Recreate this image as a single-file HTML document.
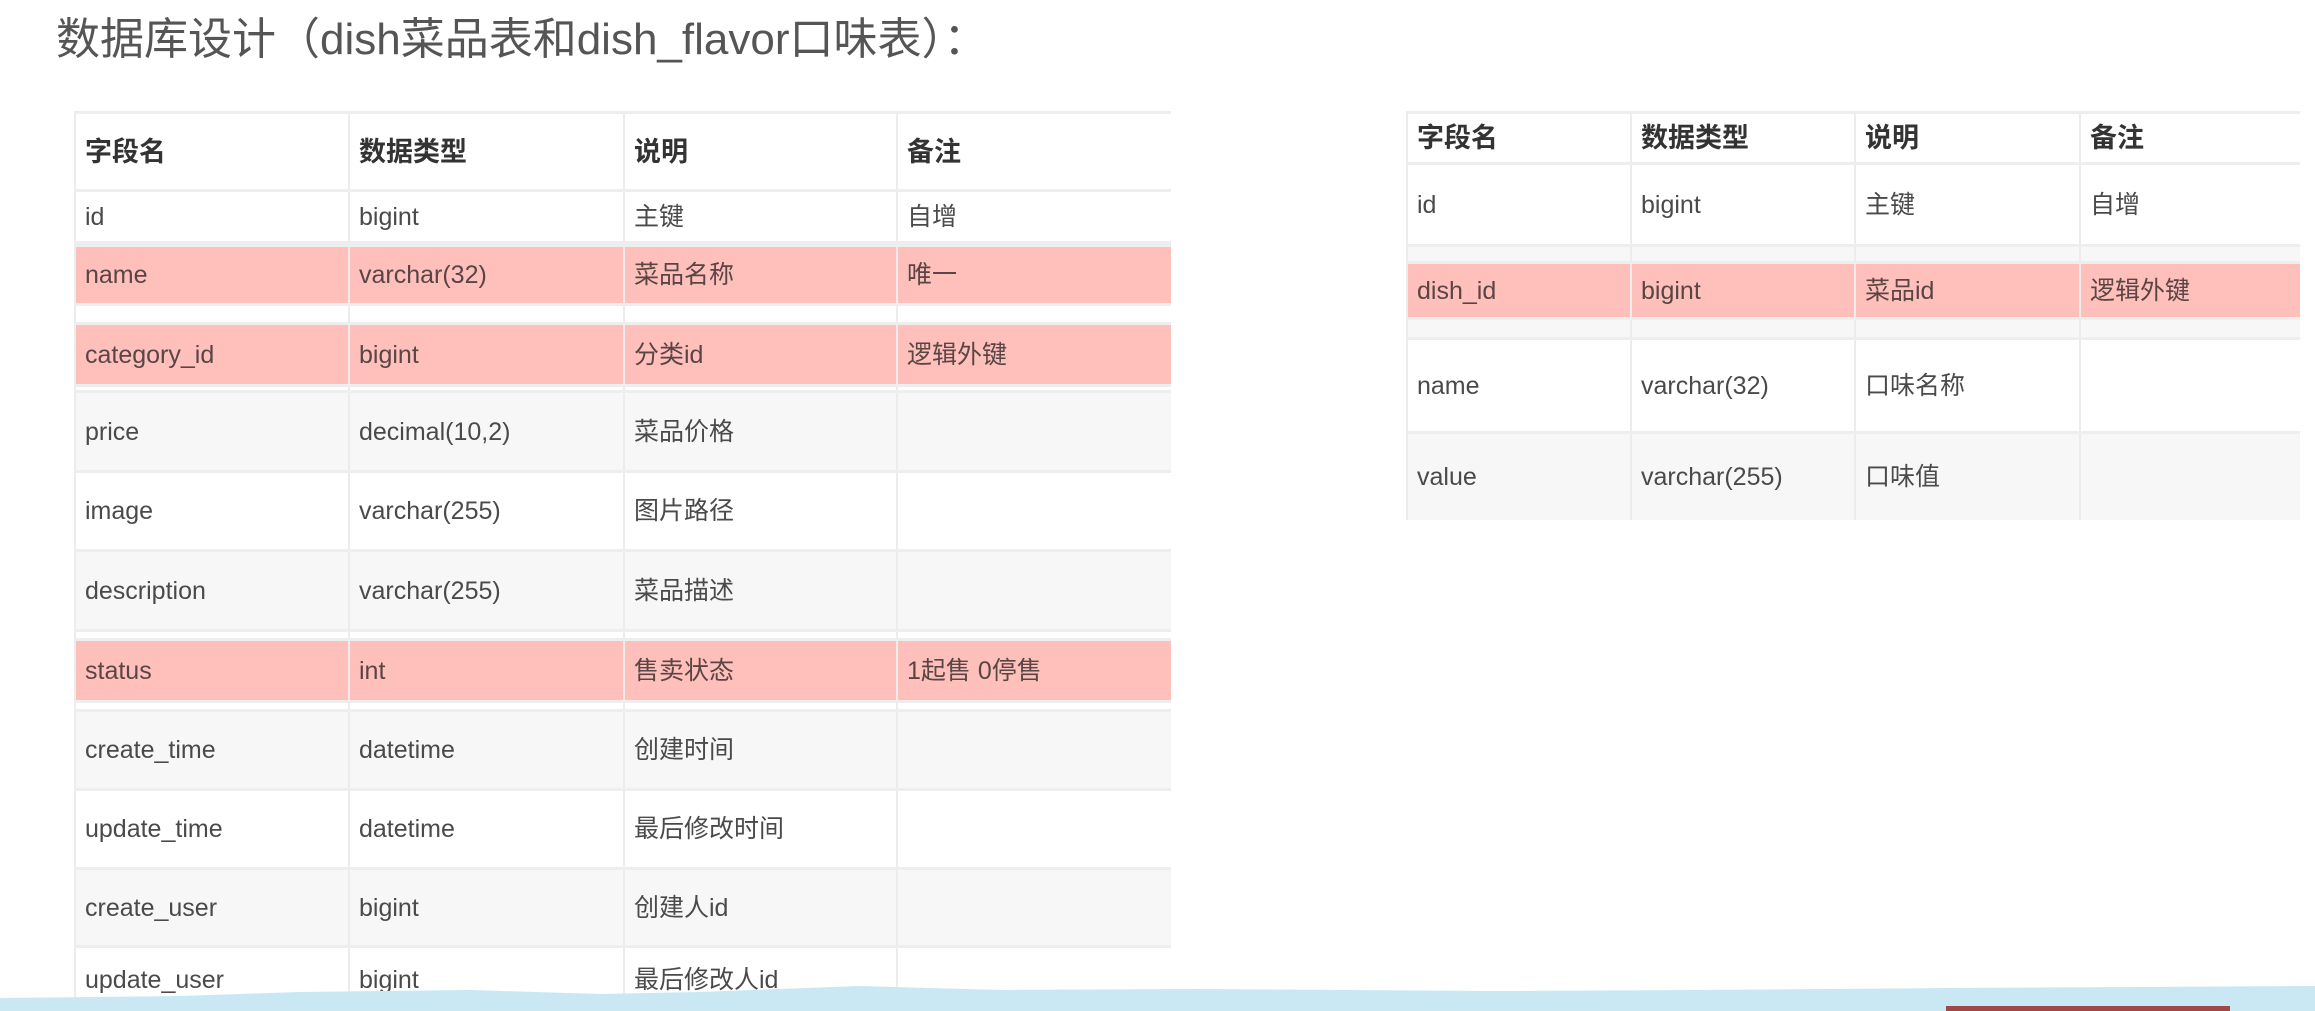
<!DOCTYPE html>
<html><head><meta charset="utf-8"><style>
body{margin:0;width:2315px;height:1011px;overflow:hidden;background:#fff;position:relative;font-family:"Liberation Sans","Noto Sans CJK SC",sans-serif;color:#4a4a4a}
.t{position:absolute;left:56px;top:12px;font-size:44px;line-height:56px;color:#555;white-space:nowrap}
.r{position:absolute;display:flex;box-sizing:border-box;border-top:3px solid #eee}
.r div{box-sizing:border-box;border-left:2px solid #ececec;padding-left:9px;display:flex;align-items:center;font-size:25px;line-height:30px;height:100%}
.h div{font-weight:bold;color:#333;font-size:27px}
.p{background:#ffc0bb;color:#5a4545}
.g{background:#f7f7f7}
.w{background:#fff}
</style></head><body>
<div class="t">数据库设计（dish菜品表和dish_flavor口味表）：</div>
<div id="L"></div><div id="R"></div>
<script>
function tbl(x,cols,rows,host){var h='';rows.forEach(function(r){h+='<div class="r '+r[2]+'" style="left:'+x+'px;top:'+r[0]+'px;height:'+(r[1]-r[0])+'px;width:'+(cols[cols.length-1]-x)+'px">';for(var i=0;i<4;i++){h+='<div style="width:'+(cols[i+1]-cols[i])+'px"><span>'+(r[3][i]||'')+'</span></div>'}h+='</div>'});document.getElementById(host).innerHTML=h}
tbl(74,[74,348,623,896,1171],[
[111,189,'w h',['字段名','数据类型','说明','备注']],
[189,241,'w',['id','bigint','主键','自增']],
[241,244,'g',[]],
[244,303,'p',['name','varchar(32)','菜品名称','唯一']],
[303,322,'w',[]],
[322,384,'p',['category_id','bigint','分类id','逻辑外键']],
[384,390,'w',[]],
[390,470,'g',['price','decimal(10,2)','菜品价格','']],
[470,549,'w',['image','varchar(255)','图片路径','']],
[549,629,'g',['description','varchar(255)','菜品描述','']],
[629,638,'w',[]],
[638,700,'p',['status','int','售卖状态','1起售 0停售']],
[700,709,'w',[]],
[709,788,'g',['create_time','datetime','创建时间','']],
[788,867,'w',['update_time','datetime','最后修改时间','']],
[867,945,'g',['create_user','bigint','创建人id','']],
[945,1011,'w',['update_user','bigint','最后修改人id','']]
],'L');
tbl(1406,[1406,1630,1854,2079,2300],[
[111,162,'w h',['字段名','数据类型','说明','备注']],
[162,244,'w',['id','bigint','主键','自增']],
[244,261,'g',[]],
[261,317,'p',['dish_id','bigint','菜品id','逻辑外键']],
[317,337,'g',[]],
[337,431,'w',['name','varchar(32)','口味名称','']],
[431,520,'g',['value','varchar(255)','口味值','']]
],'R');
</script>
<svg style="position:absolute;left:0;top:970px" width="2315" height="41"><path d="M0 28 L180 26 L300 22 L470 20 L600 24 L700 22 L860 16 L1000 20 L1200 19 L1500 21 L1700 20 L1950 18 L2315 16 L2315 41 L0 41Z" fill="#c9e8f3"/><rect x="1946" y="36" width="284" height="5" fill="#a04848"/></svg>
</body></html>
